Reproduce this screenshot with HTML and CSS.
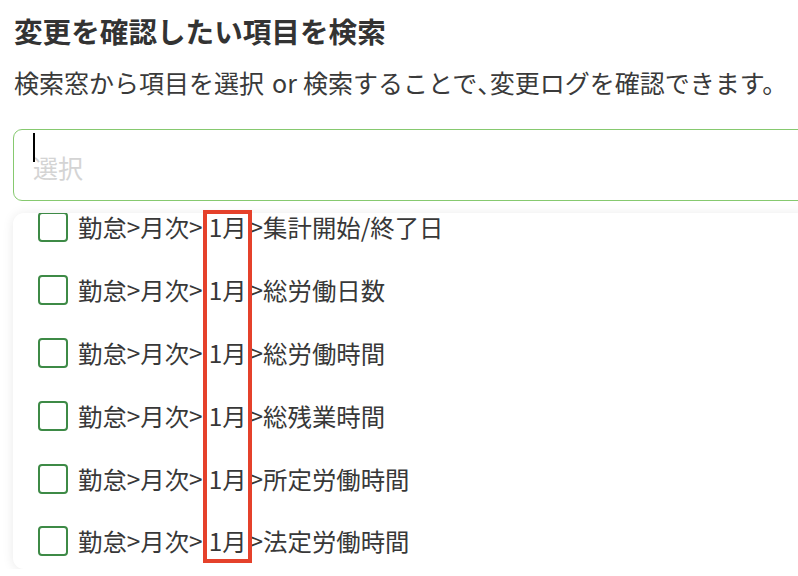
FILE: index.html
```html
<!DOCTYPE html>
<html lang="ja">
<head>
<meta charset="utf-8">
<link rel="stylesheet" href="styles.css">
</head>
<body>
<main class="page">
  <h1 class="title">変更を確認したい項目を検索</h1>
  <p class="lead">検索窓から項目を選択<span class="or">or</span>検索することで<span class="comma">、</span>変更ログを確認できます。</p>
  <div class="search">
    <span class="caret"></span>
    <span class="placeholder">選択</span>
  </div>
  <div class="dropdown-wrap">
    <div class="dropdown">
      <ul class="options">
        <li class="option"><span class="check"></span><span class="label">勤怠&gt;月次&gt;<span class="month">1月</span>&gt;集計開始/終了日</span></li>
        <li class="option"><span class="check"></span><span class="label">勤怠&gt;月次&gt;<span class="month">1月</span>&gt;総労働日数</span></li>
        <li class="option"><span class="check"></span><span class="label">勤怠&gt;月次&gt;<span class="month">1月</span>&gt;総労働時間</span></li>
        <li class="option"><span class="check"></span><span class="label">勤怠&gt;月次&gt;<span class="month">1月</span>&gt;総残業時間</span></li>
        <li class="option"><span class="check"></span><span class="label">勤怠&gt;月次&gt;<span class="month">1月</span>&gt;所定労働時間</span></li>
        <li class="option"><span class="check"></span><span class="label">勤怠&gt;月次&gt;<span class="month">1月</span>&gt;法定労働時間</span></li>
      </ul>
    </div>
    <div class="highlight"></div>
  </div>
</main>
</body>
</html>
```

FILE: styles.css
```css
html, body {
  margin: 0;
  padding: 0;
  background: #ffffff;
  overflow: hidden;
}
body {
  font-family: "Noto Sans CJK JP", "Noto Sans", sans-serif;
  color: #333333;
}
.page {
  padding-left: 13px;
  width: 800px;
}
.title {
  margin: 11px 0 0 1px;
  font-size: 28.6px;
  line-height: 40px;
  font-weight: 700;
  color: #333333;
  white-space: nowrap;
}
.lead {
  margin: 14px 0 0 1px;
  font-size: 25px;
  line-height: 34px;
  color: #3a3a3a;
  white-space: nowrap;
}
.or {
  margin: 0 6px 0 8px;
}
.comma {
  font-feature-settings: "halt" 1;
}
.search {
  position: relative;
  margin-top: 30px;
  height: 72px;
  box-sizing: border-box;
  border: 1px solid #86c96f;
  border-radius: 9px;
  display: flex;
  align-items: center;
  padding: 4px 0 0 19px;
}
.caret {
  position: absolute;
  left: 19px;
  top: 3px;
  width: 2px;
  height: 29px;
  background: #000000;
}
.placeholder {
  font-size: 25px;
  color: #d4d4d4;
}
.dropdown-wrap {
  position: relative;
  margin-top: 12px;
}
.dropdown {
  height: 356px;
  background: #ffffff;
  border-radius: 11px;
  box-shadow: 0 1px 12px rgba(0, 0, 0, 0.09);
  overflow: hidden;
}
.options {
  list-style: none;
  margin: -17px 0 0 0;
  padding: 0;
}
.option {
  height: 62.8px;
  display: flex;
  align-items: center;
  padding-left: 25px;
  gap: 10px;
}
.check {
  width: 30px;
  height: 30px;
  box-sizing: border-box;
  border: 2px solid #3d8a46;
  border-radius: 4px;
  background: #ffffff;
  flex: none;
}
.label {
  font-size: 24.4px;
  line-height: 26px;
  color: #383838;
  white-space: nowrap;
}
.month {
  padding: 0 3px 0 6px;
}
.highlight {
  position: absolute;
  left: 190px;
  top: -3px;
  width: 49px;
  height: 353px;
  box-sizing: border-box;
  border: 4.5px solid #e5412b;
}
```
